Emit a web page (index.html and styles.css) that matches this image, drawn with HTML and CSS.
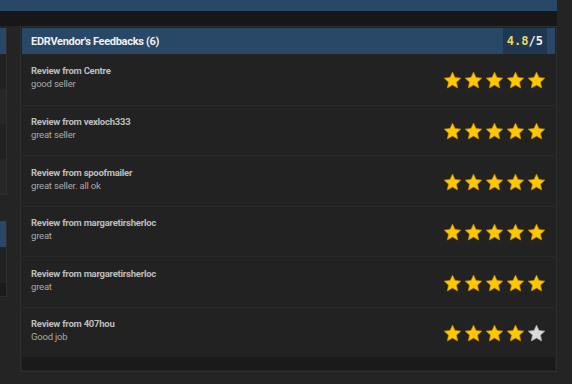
FILE: index.html
```html
<!DOCTYPE html>
<html>
<head>
    <title>Vendor Feedbacks</title>
    <link rel="stylesheet" href="styles.css">
</head>
<body>
    <div class="page">
        <div class="topbar"></div>
        <div class="strip"></div>

        <div class="layout">
            <div class="side">
                <div class="side-panel first">
                    <div class="side-head"></div>
                    <div class="side-row"></div>
                    <div class="side-row alt"></div>
                    <div class="side-row"></div>
                    <div class="side-row alt"></div>
                </div>
                <div class="side-panel second">
                    <div class="side-head"></div>
                    <div class="side-row tall"></div>
                    <div class="side-row dark"></div>
                </div>
            </div>

            <div class="panel">
                <div class="panel-head">
                    <span class="panel-title">EDRVendor's Feedbacks (6)</span>
                    <span class="score"><span class="score-value">4.8</span>/5</span>
                </div>

                <div class="reviews" id="reviews"></div>

                <div class="panel-foot"></div>
            </div>
        </div>
    </div>

    <script>
        var reviews = [
            { from: 'Centre', text: 'good seller', stars: 5 },
            { from: 'vexloch333', text: 'great seller', stars: 5 },
            { from: 'spoofmailer', text: 'great seller. all ok', stars: 5 },
            { from: 'margaretirsherloc', text: 'great', stars: 5 },
            { from: 'margaretirsherloc', text: 'great', stars: 5 },
            { from: '407hou', text: 'Good job', stars: 4 }
        ];

        var starPath = 'M10 1.2l2.6 5.6 6.1.7-4.5 4.2 1.2 6.1L10 14.8l-5.4 3 1.2-6.1L1.3 7.5l6.1-.7z';

        function starSvg(on) {
            return '<svg class="star ' + (on ? 'on' : 'off') + '" viewBox="0 0 20 20" width="19" height="19">' +
                '<path d="' + starPath + '"/></svg>';
        }

        var list = document.getElementById('reviews');
        reviews.forEach(function(r) {
            var stars = '';
            for (var i = 0; i < 5; i++) {
                stars += starSvg(i < r.stars);
            }
            var row = document.createElement('div');
            row.className = 'review';
            row.innerHTML =
                '<div class="review-text">' +
                    '<div class="review-from">Review from ' + r.from + '</div>' +
                    '<div class="review-body">' + r.text + '</div>' +
                '</div>' +
                '<div class="stars">' + stars + '</div>';
            list.appendChild(row);
        });
    </script>
</body>
</html>
```

FILE: styles.css
```css
body {
    margin: 0;
    background-color: #242424;
    font-family: Roboto, "Liberation Sans", sans-serif;
    overflow: hidden;
}
.page {
    width: 557px;
}
.topbar {
    height: 11px;
    background-color: #294766;
}
.strip {
    height: 15px;
    background-color: #171717;
}
.layout {
    display: flex;
    gap: 13px;
}
.side {
    width: 7px;
    display: flex;
    flex-direction: column;
    gap: 26px;
    padding-top: 2px;
}
.side-panel {
    border-right: 1px solid #2e2e2e;
    border-bottom: 1px solid #2e2e2e;
}
.side-head {
    height: 26px;
    background-color: #294766;
}
.side-row {
    height: 35px;
    background-color: #222222;
}
.side-row.alt {
    background-color: #272727;
}
.side-row.tall {
    height: 36px;
}
.side-row.dark {
    height: 13px;
    background-color: #1a1a1a;
}
.panel {
    flex: 1;
    background-color: #222222;
    border: 1px solid #2e2e2e;
    padding: 1px;
}
.panel-head {
    height: 26px;
    background-color: #294766;
    display: flex;
    align-items: center;
    justify-content: space-between;
    padding-left: 9px;
}
.panel-title {
    color: #f0f0f0;
    font-size: 11px;
    font-weight: bold;
    letter-spacing: -0.3px;
}
.score {
    align-self: stretch;
    display: flex;
    align-items: center;
    padding: 0 4px;
    margin-right: 8px;
    background-color: #203752;
    color: #f0f0f0;
    font-family: "DejaVu Sans Mono", monospace;
    font-size: 12px;
    font-weight: bold;
}
.score-value {
    color: #e9d75a;
}
.review {
    height: 50.5px;
    box-sizing: border-box;
    display: flex;
    align-items: center;
    justify-content: space-between;
    padding: 0 9px;
    border-top: 1px solid #292929;
}
.review:first-child {
    border-top: none;
}
.review-text {
    margin-top: -4px;
}
.review-from {
    color: #bdbdbd;
    font-size: 9.5px;
    font-weight: bold;
    letter-spacing: -0.25px;
    line-height: 13px;
}
.review-body {
    color: #a9a9a9;
    font-size: 9.5px;
    letter-spacing: -0.2px;
    line-height: 13px;
}
.stars {
    display: flex;
    gap: 2px;
    margin-top: 3px;
}
.star.on path {
    fill: #ffc800;
    stroke: #c98f00;
    stroke-width: 0.8;
}
.star.off path {
    fill: #dadada;
    stroke: #a5a5a5;
    stroke-width: 0.8;
}
.panel-foot {
    height: 13px;
    background-color: #1a1a1a;
}
```
